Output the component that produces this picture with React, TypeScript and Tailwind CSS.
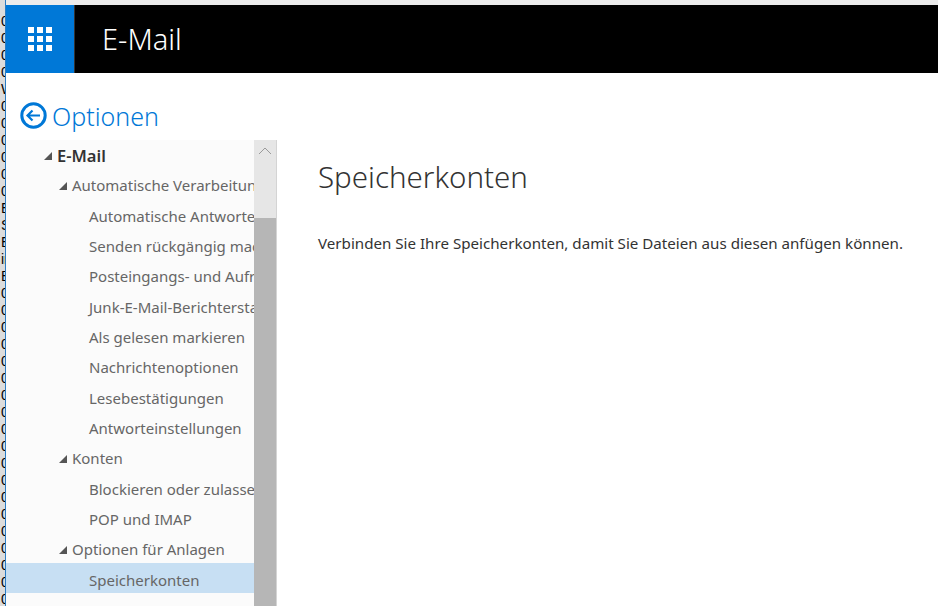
const strip = ["0","0","0","0","W","0","0","0","0","0","0","E","S","E","in","B","0","0","0","0","0","0","0","0","0","0","0","0","0","0","0","0","0","0","0","0"];

type Row = { t: string; level: 0 | 1 | 2; sel?: boolean };
const rows: Row[] = [
  { t: "Automatische Verarbeitung", level: 1 },
  { t: "Automatische Antworten", level: 2 },
  { t: "Senden rückgängig machen", level: 2 },
  { t: "Posteingangs- und Aufräumregeln", level: 2 },
  { t: "Junk-E-Mail-Berichterstattung", level: 2 },
  { t: "Als gelesen markieren", level: 2 },
  { t: "Nachrichtenoptionen", level: 2 },
  { t: "Lesebestätigungen", level: 2 },
  { t: "Antworteinstellungen", level: 2 },
  { t: "Konten", level: 1 },
  { t: "Blockieren oder zulassen", level: 2 },
  { t: "POP und IMAP", level: 2 },
  { t: "Optionen für Anlagen", level: 1 },
  { t: "Speicherkonten", level: 2, sel: true },
  { t: "Layout", level: 1 },
];

function Tri({ className }: { className: string }) {
  return (
    <svg width="8" height="8" viewBox="0 0 8 8" className={className}>
      <path d="M8 0V8H0Z" fill="#555" />
    </svg>
  );
}

export default function App() {
  return (
    <div className="w-[938px] h-[606px] overflow-hidden flex bg-white font-['Noto_Sans','Open_Sans',sans-serif]">
      <div className="w-[5px] shrink-0 bg-[#dcdcdc] overflow-hidden pt-[13px] pl-px font-['Liberation_Sans',sans-serif] text-[14px] leading-[17px] text-black">
        {strip.map((s, i) => (
          <div key={i} className="h-[17px] whitespace-nowrap">{s}</div>
        ))}
      </div>
      <div className="w-px shrink-0 bg-[#2b7cc4]" />
      <div className="flex-1 min-w-0 flex flex-col">
        <div className="h-[5px] shrink-0 bg-[#ececec]" />
        <div className="h-[68px] shrink-0 bg-black flex">
          <div className="w-[68px] bg-[#0078d7] flex items-center justify-center">
            <div className="grid grid-cols-3 gap-[3px]">
              {Array.from({ length: 9 }).map((_, i) => (
                <div key={i} className="w-[6px] h-[6px] bg-white" />
              ))}
            </div>
          </div>
          <div className="w-px bg-[#333]" />
          <div className="pl-[27px] text-[29px] font-light leading-[68px] text-white">E-Mail</div>
        </div>
        <div className="flex-1 min-h-0 flex flex-col">
          <div className="h-[67px] shrink-0 flex items-center pl-[14px] pt-[18px] gap-[5px] text-[#0078d7]">
            <svg width="27" height="27" viewBox="0 0 27 27" fill="none" stroke="#0078d7">
              <circle cx="13.5" cy="13.5" r="11.7" strokeWidth="3" />
              <path d="M20 13.5H7.5M12.5 8.5l-5 5 5 5" strokeWidth="2.2" />
            </svg>
            <span className="text-[25px] font-light leading-[30px]">Optionen</span>
          </div>
          <div className="flex-1 min-h-0 flex">
            <div className="w-[271px] shrink-0 flex">
              <div className="w-[248px] shrink-0 overflow-hidden bg-[#fbfbfb]">
                <div className="h-[28.5px] pt-[4px] flex items-center pl-[38px] gap-[5px] text-[16.5px] font-semibold text-[#333]">
                  <Tri className="shrink-0" />
                  <span>E-Mail</span>
                </div>
                {rows.map((r) => (
                  <div
                    key={r.t}
                    className={
                      "h-[30.33px] pt-[4px] flex items-center whitespace-nowrap text-[15px] text-[#666] " +
                      (r.level === 1 ? "pl-[53px] gap-[5px] " : "pl-[83px] ") +
                      (r.sel ? "bg-[#c7dff3]" : "")
                    }
                  >
                    {r.level === 1 && <Tri className="shrink-0" />}
                    <span>{r.t}</span>
                  </div>
                ))}
              </div>
              <div className="w-[23px] shrink-0 flex">
                <div className="w-[22px] bg-[#b6b6b6] flex flex-col">
                  <div className="h-[78px] bg-[#e6e6e6] flex justify-center pt-[7px]">
                    <svg width="14" height="8" viewBox="0 0 14 8" fill="none" stroke="#9a9a9a" strokeWidth="1">
                      <path d="M1 7l6-6 6 6" />
                    </svg>
                  </div>
                </div>
                <div className="w-px bg-[#d4d4d4]" />
              </div>
            </div>
            <div className="flex-1 min-w-0 pl-[41px]">
              <h1 className="text-[29.5px] font-light leading-[38px] text-[#333] mt-[18px]">Speicherkonten</h1>
              <p className="text-[15.15px] leading-[20px] text-[#333] mt-[37px] whitespace-nowrap">
                Verbinden Sie Ihre Speicherkonten, damit Sie Dateien aus diesen anfügen können.
              </p>
            </div>
          </div>
        </div>
      </div>
    </div>
  );
}
